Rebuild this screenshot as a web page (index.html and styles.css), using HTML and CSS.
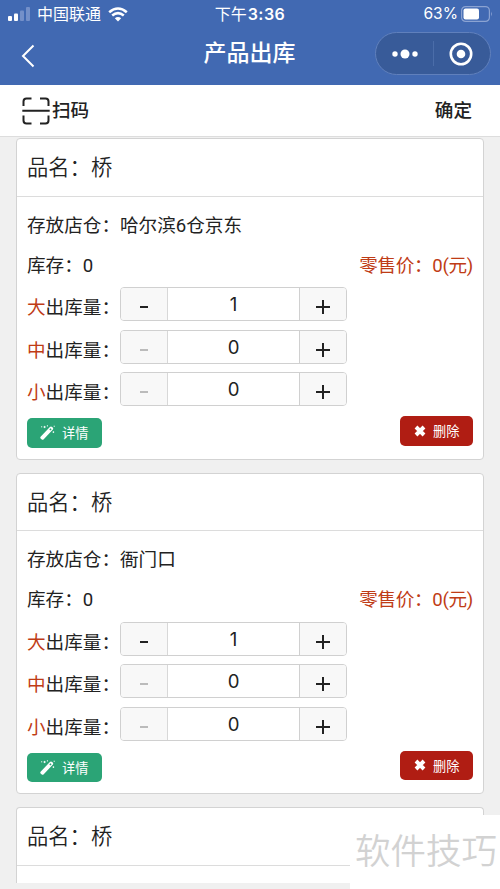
FILE: index.html
```html
<!DOCTYPE html>
<html lang="zh-CN">
<head>
<meta charset="utf-8">
<meta name="viewport" content="width=device-width, initial-scale=1">
<title>产品出库</title>
<link rel="stylesheet" href="styles.css">
</head>
<body>
<svg class="defs" aria-hidden="true">
  <symbol id="wand" viewBox="0 0 15 15"><path d="M.6 11.800 9.900 2q1.100-1.100 2.200 0l.6.6q1 1.100 0 2.200L3.500 14.500q-.9.7-1.700 0l-1.200-1.100q-.7-.8 0-1.600Z" fill="#fff"/><path d="m9.300 4.600 1.100 1 1.200-1.300-1.100-1Z" fill="#2ba476"/><path d="M4.600.9v2.200M3.500 2h2.200M7.400.2v1.300M1.700 1.200v1.200M13.400 6.400v1.500M12.700 7.100h1.500M14.200.7v1.200" stroke="#fff" stroke-width=".9"/></symbol>
  <symbol id="cross" viewBox="0 0 12 12"><path d="M2 2l8 8M10 2l-8 8" stroke="#fff" stroke-width="3.900"/></symbol>
</svg>
<div class="app">
  <header class="top">
    <div class="status">
      <div class="carrier">
        <svg class="signal" viewBox="0 0 22 14"><rect y="9" width="4" height="5" rx="1" fill="#fff"/><rect x="6" y="6.500" width="4" height="7.500" rx="1" fill="#fff"/><rect x="12" y="3.500" width="4" height="10.500" rx="1" fill="#7490c9"/><rect x="18" y="0" width="4" height="14" rx="1" fill="#7490c9"/></svg>
        <span>中国联通</span>
        <svg class="wifi" viewBox="0 0 20 15"><path d="M1.200 5.300Q10-2.300 18.800 5.300M4.200 8.600q5.800-4.800 11.600 0" fill="none" stroke="#fff" stroke-width="2.600"/><path d="M6.800 11.200q3.200-2.500 6.400 0L10 14.600Z" fill="#fff"/></svg>
      </div>
      <div class="clock">下午<b>3:36</b></div>
      <div class="power"><span>63%</span>
        <svg class="battery" viewBox="0 0 32 16"><rect x=".6" y=".6" width="27.800" height="14.800" rx="4" fill="none" stroke="#8ba3d2" stroke-width="1.200"/><rect x="2.500" y="2.500" width="15.500" height="11" rx="2" fill="#fff"/><path d="M30 5.500q1.800 2.500 0 5Z" fill="#8ba3d2"/></svg>
      </div>
    </div>
    <div class="nav">
      <svg class="back" viewBox="0 0 14 24"><path d="M12.500 1.500 2 12l10.500 10.500" fill="none" stroke="#fff" stroke-width="2"/></svg>
      <h1>产品出库</h1>
      <div class="capsule">
        <svg class="dots" viewBox="0 0 26 10"><circle cx="3" cy="5" r="2.700" fill="#fff"/><circle cx="13" cy="5" r="4.500" fill="#fff"/><circle cx="23" cy="5" r="2.700" fill="#fff"/></svg>
        <i></i>
        <svg class="target" viewBox="0 0 24 24"><circle cx="12" cy="12" r="10.200" fill="none" stroke="#fff" stroke-width="2.600"/><circle cx="12" cy="12" r="4.300" fill="#fff"/></svg>
      </div>
    </div>
  </header>
  <div class="toolbar">
    <div class="scan">
      <svg viewBox="0 0 28 28"><path d="M1.500 9V4.500q0-3 3-3H9.500M18 1.500h5.500q3 0 3 3V9M1.500 18.500v5q0 3 3 3H9.500M18 26.500h5.500q3 0 3-3v-5M.3 13.700h27.400" fill="none" stroke="#222" stroke-width="2"/></svg>
      <span>扫码</span>
    </div>
    <span>确定</span>
  </div>
  <main class="list">
    <section class="card">
      <h2>品名：桥</h2>
      <div class="body">
        <div class="line">存放店仓：哈尔滨6仓京东</div>
        <div class="line"><span>库存：0</span><span class="price">零售价：0(元)</span></div>
        <div class="qty"><label><em>大</em>出库量：</label><div class="stepper"><span class="minus"></span><span class="num">1</span><span class="plus"></span></div></div>
        <div class="qty"><label><em>中</em>出库量：</label><div class="stepper"><span class="minus off"></span><span class="num">0</span><span class="plus"></span></div></div>
        <div class="qty"><label><em>小</em>出库量：</label><div class="stepper"><span class="minus off"></span><span class="num">0</span><span class="plus"></span></div></div>
        <div class="actions"><span class="btn detail"><svg><use href="#wand"/></svg>详情</span><span class="btn remove"><svg><use href="#cross"/></svg>删除</span></div>
      </div>
    </section>
    <section class="card">
      <h2>品名：桥</h2>
      <div class="body">
        <div class="line">存放店仓：衙门口</div>
        <div class="line"><span>库存：0</span><span class="price">零售价：0(元)</span></div>
        <div class="qty"><label><em>大</em>出库量：</label><div class="stepper"><span class="minus"></span><span class="num">1</span><span class="plus"></span></div></div>
        <div class="qty"><label><em>中</em>出库量：</label><div class="stepper"><span class="minus off"></span><span class="num">0</span><span class="plus"></span></div></div>
        <div class="qty"><label><em>小</em>出库量：</label><div class="stepper"><span class="minus off"></span><span class="num">0</span><span class="plus"></span></div></div>
        <div class="actions"><span class="btn detail"><svg><use href="#wand"/></svg>详情</span><span class="btn remove"><svg><use href="#cross"/></svg>删除</span></div>
      </div>
    </section>
    <section class="card last">
      <h2>品名：桥</h2>
    </section>
  </main>
  <div class="watermark">软件技巧</div>
</div>
</body>
</html>
```

FILE: styles.css
```css
* { box-sizing: border-box; }
body {
  margin: 0;
  background: #f0f0f0;
  color: #222;
  font-family: Inter, "Noto Sans CJK SC", sans-serif;
  font-size: 18.6px;
}
svg { display: block; flex: none; }
.defs { position: absolute; width: 0; height: 0; }
.app {
  position: relative;
  width: 500px;
  height: 889px;
  overflow: hidden;
}
.top { height: 85px; background: #4169b2; color: #fff; }
.status {
  display: grid;
  grid-template-columns: 1fr auto 1fr;
  align-items: center;
  height: 28px;
  padding: 0 8px;
  font-size: 16px;
  line-height: 28px;
}
.carrier { display: flex; align-items: center; }
.signal { width: 22px; height: 14px; margin-right: 7px; }
.wifi { width: 20px; height: 15px; margin-left: 7px; }
.clock b { font-weight: 600; letter-spacing: .5px; margin-left: 1px; }
.power { display: flex; align-items: center; justify-content: flex-end; gap: 3px; font-size: 15.600px; }
.battery { width: 32px; height: 16px; margin-right: -1px; }
.nav {
  display: grid;
  grid-template-columns: 1fr auto 1fr;
  align-items: center;
  height: 51px;
  padding: 0 9px 0 21px;
}
.back { width: 14px; height: 24px; margin-top: 4px; }
h1 {
  margin: 0 13px 0 0;
  font-size: 23px;
  font-weight: 500;
  line-height: 51px;
}
.capsule {
  display: flex;
  align-items: center;
  justify-self: end;
  width: 116px;
  height: 43px;
  padding: 0 17px 0 16px;
  justify-content: space-between;
  border: 1px solid #6080bc;
  border-radius: 22px;
  background: #385b99;
}
.dots { width: 26px; height: 10px; }
.target { width: 24px; height: 24px; }
.capsule i { width: 1px; height: 25px; background: #4b6da9; }
.toolbar {
  display: flex;
  align-items: center;
  justify-content: space-between;
  height: 52px;
  padding: 0 28px 0 22px;
  border-bottom: 1px solid #ddd;
  background: #fff;
  font-weight: 500;
  line-height: 51px;
}
.scan { display: flex; align-items: center; gap: 2px; }
.scan svg { width: 28px; height: 28px; }
.list { padding: 1px 16px 0; }
.card {
  height: 321.500px;
  margin-bottom: 13px;
  border: 1px solid #d3d3d3;
  border-radius: 4px;
  background: #fff;
}
h2 {
  margin: 0;
  height: 57.500px;
  padding-left: 10px;
  border-bottom: 1px solid #dcdcdc;
  font-size: 21.300px;
  font-weight: 350;
  line-height: 57px;
}
.body { padding: 9px 10px 0; }
.line {
  display: flex;
  justify-content: space-between;
  height: 40px;
  font-family: Roboto, "Noto Sans CJK SC", sans-serif;
  line-height: 40px;
}
.price, em { color: #bf3c16; font-style: normal; }
.price { letter-spacing: -.3px; }
.qty { display: flex; height: 42.700px; }
.line + .qty { margin-top: 1.500px; }
.qty label { width: 93px; line-height: 40px; }
.stepper {
  display: grid;
  grid-template-columns: 47px 1fr 47px;
  width: 227px;
  height: 34px;
  border: 1px solid #d0d0d0;
  border-radius: 4px;
  overflow: hidden;
}
.minus, .plus { display: grid; place-items: center; background: #f8f8f8; padding-top: 6px; }
.minus { border-right: 1px solid #d8d8d8; }
.plus { border-left: 1px solid #d0d0d0; }
.minus::before { content: ""; width: 8px; height: 2px; background: #222; }
.minus.off::before { background: #bbb; }
.plus::before {
  content: "";
  width: 14px;
  height: 14px;
  background: linear-gradient(#222, #222) center / 14px 2px no-repeat, linear-gradient(#222, #222) center / 2px 14px no-repeat;
}
.num { text-align: center; line-height: 32px; }
.actions { display: flex; justify-content: space-between; }
.btn {
  display: flex;
  align-items: center;
  height: 29.500px;
  border-radius: 5px;
  color: #fff;
  font-size: 13.200px;
}
.detail { width: 75px; margin-top: 3px; padding-left: 13px; gap: 7px; background: #2ba476; }
.detail svg { width: 15px; height: 15px; }
.remove { width: 73px; margin-top: 1px; padding-left: 14px; gap: 7px; background: #b01d13; }
.remove svg { width: 12px; height: 12px; }
.last { height: 75.500px; border-bottom: 0; border-radius: 4px 4px 0 0; }
.watermark {
  position: absolute;
  right: 0;
  bottom: 0;
  width: 150px;
  height: 74px;
  padding-left: 5px;
  background: #fff;
  color: #d2d2d2;
  font-size: 35.500px;
  font-weight: 350;
  line-height: 74px;
  white-space: nowrap;
}
```
